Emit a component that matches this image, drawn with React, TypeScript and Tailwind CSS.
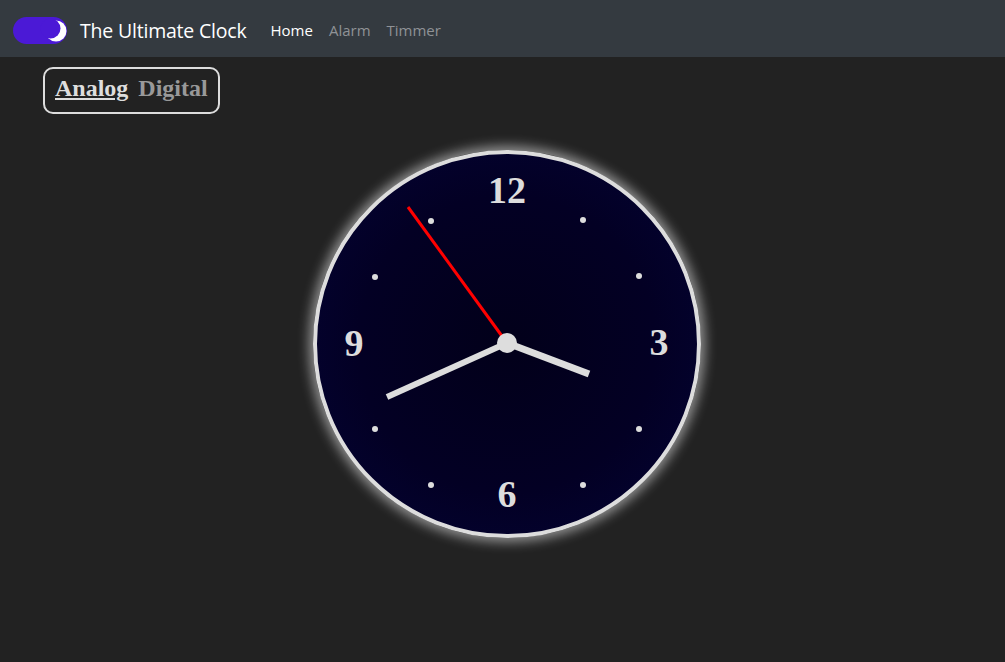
import React from "react";

const dots: [number, number][] = [
  [114, 67], [266, 66], [58, 123], [322, 122], [58, 275], [322, 275], [114, 331], [266, 331],
];

export default function App() {
  return (
    <div className="min-h-[662px] bg-[#222222]" style={{ fontFamily: "'Open Sans', sans-serif" }}>
      <nav className="h-[57px] bg-[#343a40] flex items-center pl-[13px] pt-[4px]">
        <svg width="54" height="27" viewBox="0 0 54 27" className="shrink-0">
          <rect x="0" y="0" width="54" height="27" rx="13.5" fill="#4b19d6" />
          <circle cx="43" cy="14" r="10.5" fill="#ffffff" />
          <circle cx="37.5" cy="11.5" r="10" fill="#4b19d6" />
        </svg>
        <span className="ml-[13px] text-[19.5px] text-white tracking-[-0.2px]">The Ultimate Clock</span>
        <div className="flex ml-[24px] gap-[16px] text-[15px]">
          <span className="text-white">Home</span>
          <span className="text-[#8f9296]">Alarm</span>
          <span className="text-[#8f9296]">Timmer</span>
        </div>
      </nav>
      <div className="pl-[43px] pt-[10px]">
        <div
          className="inline-flex items-center gap-[10px] h-[47px] px-[10px] pb-[5px] border-2 border-[#dddddd] rounded-[10px] text-[24px] font-bold"
          style={{ fontFamily: "'Liberation Serif', serif" }}
        >
          <span className="text-[#dddddd] underline">Analog</span>
          <span className="text-[#999999]">Digital</span>
        </div>
      </div>
      <div className="flex justify-center pl-[9px] pt-[36px]">
        <div
          className="w-[388px] h-[388px] rounded-full border-4 border-[#dddddd] shadow-[0_0_12px_4px_rgba(255,255,255,0.5)]"
          style={{ background: "radial-gradient(circle, #02001a 0%, #030024 55%, #040437 100%)" }}
        >
          <svg width="380" height="380" viewBox="0 0 380 380">
            <g fill="#dddddd" fontFamily="'Liberation Serif', serif" fontWeight="bold" fontSize="38" textAnchor="middle">
              <text x="190" y="49">12</text>
              <text x="342" y="201">3</text>
              <text x="190" y="353">6</text>
              <text x="37" y="202">9</text>
            </g>
            {dots.map(([x, y], i) => (
              <circle key={i} cx={x} cy={y} r="3" fill="#dddddd" />
            ))}
            <line x1="190" y1="189" x2="70" y2="243" stroke="#dddddd" strokeWidth="6" />
            <line x1="190" y1="189" x2="272" y2="220" stroke="#dddddd" strokeWidth="7" />
            <line x1="190" y1="189" x2="91" y2="53" stroke="#ff0000" strokeWidth="3" />
            <circle cx="190" cy="189" r="10" fill="#dddddd" />
          </svg>
        </div>
      </div>
    </div>
  );
}
